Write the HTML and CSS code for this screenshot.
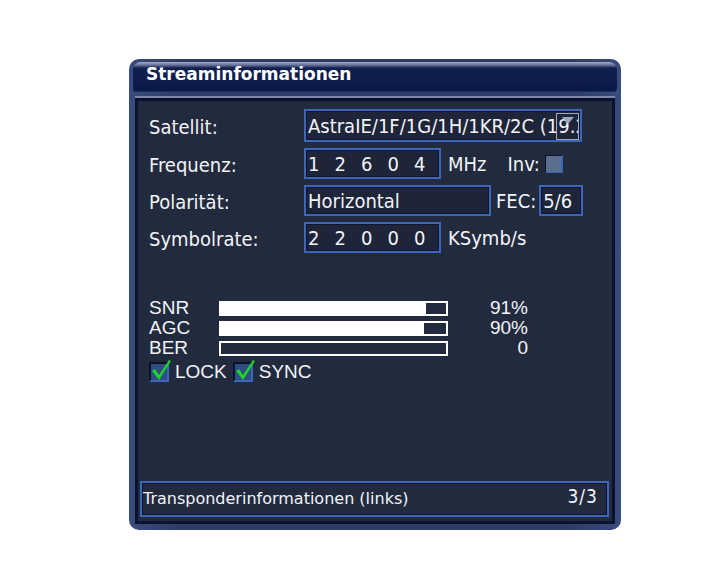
FILE: index.html
```html
<!DOCTYPE html>
<html lang="de">
<head>
    <meta charset="UTF-8">
    <title>Streaminformationen</title>
    <link rel="stylesheet" href="styles.css">
</head>
<body>
    <div class="window">
        <header class="titlebar">
            <h1>Streaminformationen</h1>
        </header>

        <main class="content">
            <section class="tuning">
                <span class="label">Satellit:</span>
                <div class="line">
                    <div class="field sat">
                        <span class="sattext">AstraIE/1F/1G/1H/1KR/2C (19.2</span>
                        <span class="scroll"></span>
                    </div>
                </div>

                <span class="label">Frequenz:</span>
                <div class="line">
                    <div class="field short digits">
                        <span>1</span><span>2</span><span>6</span><span>0</span><span>4</span>
                    </div>
                    <span class="unit">MHz</span>
                    <span class="inv">Inv:</span>
                    <span class="toggle"></span>
                </div>

                <span class="label">Polarität:</span>
                <div class="line">
                    <div class="field pol">Horizontal</div>
                    <span class="fec">FEC:</span>
                    <div class="field fecval">5/6</div>
                </div>

                <span class="label">Symbolrate:</span>
                <div class="line">
                    <div class="field short digits">
                        <span>2</span><span>2</span><span>0</span><span>0</span><span>0</span>
                    </div>
                    <span class="unit">KSymb/s</span>
                </div>
            </section>

            <section class="signal">
                <span>SNR</span>
                <div class="bar"><div class="fill" style="width: 91%"></div></div>
                <span class="val">91%</span>

                <span>AGC</span>
                <div class="bar"><div class="fill" style="width: 90%"></div></div>
                <span class="val">90%</span>

                <span>BER</span>
                <div class="bar"><div class="fill" style="width: 0%"></div></div>
                <span class="val">0</span>
            </section>

            <div class="flags">
                <span class="check"><svg viewBox="0 0 20 22"><path d="M1 12 L4 10 L8 16 L18 1 L20 2 L8 21 Z" fill="#1fd12a"/></svg></span>
                <span>LOCK</span>
                <span class="check"><svg viewBox="0 0 20 22"><path d="M1 12 L4 10 L8 16 L18 1 L20 2 L8 21 Z" fill="#1fd12a"/></svg></span>
                <span>SYNC</span>
            </div>

            <footer class="status">
                <span>Transponderinformationen (links)</span>
                <span class="page">3/3</span>
            </footer>
        </main>
    </div>
</body>
</html>
```

FILE: styles.css
```css
body {
    margin: 0;
    background: #fff;
    font-family: "DejaVu Sans Condensed", "DejaVu Sans", sans-serif;
    color: #f2f4f8;
}

.window {
    margin: 59px 0 0 129px;
    width: 492px;
    height: 471px;
    box-sizing: border-box;
    padding: 3px 6px 6px 6px;
    border-radius: 10px;
    background: linear-gradient(to right, #3a4c7c, #2c3d68 10%, #2c3d68 90%, #3a4c7c);
    display: flex;
    flex-direction: column;
}

.titlebar {
    height: 30px;
    margin: 0 -2px;
    border-radius: 8px 8px 4px 4px;
    background: linear-gradient(to bottom, #a4acbc 0, #68739a 3px, #10204f 6px, #0a1848 100%);
    box-shadow: inset 0 -1px 0 #1c2a5c;
    padding-left: 13px;

    h1 {
        margin: 0;
        font-family: "DejaVu Sans", sans-serif;
        font-size: 17px;
        font-weight: bold;
        line-height: 25px;
        color: #fff;
    }
}

.content {
    margin-top: 4px;
    border-top: 2px solid #7b88a8;
    flex-grow: 1;
    background: #222a3d;
    box-shadow: inset 0 0 0 3px #0b1230;
    display: flex;
    flex-direction: column;
    padding: 11px 8px 7px 14px;
}

.tuning {
    display: grid;
    grid-template-columns: 155px 1fr;
    row-gap: 6px;
    align-items: center;
    font-size: 20px;

    .label {
        padding-top: 2px;
    }
}

.line {
    display: flex;
    align-items: center;
}

.field {
    box-sizing: border-box;
    height: 31px;
    border: 2px solid #3d66b8;
    box-shadow: inset 0 0 0 1px #0e1633;
    background: #1e2538;
    padding: 1px 2px 0;
    line-height: 27px;
    white-space: nowrap;
    overflow: hidden;
}

.sat {
    width: 278px;
    height: 33px;
    line-height: 29px;
    position: relative;
    overflow: visible;
}

.sattext {
    display: block;
    overflow: hidden;
}

.scroll {
    position: absolute;
    right: 1px;
    top: 2px;
    width: 21px;
    height: 25px;
    border: 1px solid #a0a8c0;

    &::after {
        content: "";
        position: absolute;
        left: 5px;
        top: 3px;
        border: 6px solid transparent;
        border-top: 7px solid #a0a8c0;
    }
}

.short {
    width: 137px;
}

.digits {
    display: flex;
    span {
        width: 26.5px;
        flex-shrink: 0;
    }
}

.unit {
    margin-left: 7px;
}

.inv {
    margin-left: 21px;
}

.toggle {
    width: 15px;
    height: 16px;
    margin-left: 5px;
    background: #5a6e90;
    border: 1px solid #0b1230;
    border-right: 2px solid #3d66b8;
    border-bottom: 1px solid #3d66b8;
}

.pol {
    width: 187px;
}

.fec {
    margin-left: 5px;
}

.fecval {
    width: 44px;
    margin-left: 3px;
}

.signal {
    margin-top: 45px;
    display: grid;
    grid-template-columns: 70px 229px 80px;
    grid-auto-rows: 20px;
    align-items: center;
    font-family: "Liberation Sans", Arial, sans-serif;
    font-size: 19px;
    line-height: 20px;

    .val {
        text-align: right;
    }
}

.bar {
    height: 15px;
    box-sizing: border-box;
    border: 2px solid #fff;
    background: #222a3d;
    .fill {
        height: 100%;
        background: #fff;
    }
}

.flags {
    display: flex;
    align-items: center;
    margin-top: 3px;
    font-family: "Liberation Sans", Arial, sans-serif;
    font-size: 19px;

    .check {
        width: 16px;
        height: 16px;
        border: 2px solid #3d66b8;
        border-top-color: #0b1230;
        border-left-color: #0b1230;
        background: #2f4d80;
        position: relative;
        margin-right: 6px;
        svg {
            position: absolute;
            left: 0;
            top: -5px;
            width: 20px;
            height: 22px;
        }
    }
    span + .check {
        margin-left: 6px;
    }
}

.status {
    margin: auto -2px 0 -9px;
    height: 36px;
    box-sizing: border-box;
    border: 2px solid #3d66b8;
    box-shadow: inset 0 0 0 1px #0e1633;
    display: flex;
    justify-content: space-between;
    align-items: center;
    padding: 0 9px 2px 1px;
    font-family: "DejaVu Sans", sans-serif;
    font-size: 16px;

    .page {
        font-family: "DejaVu Sans Condensed", sans-serif;
        font-size: 19px;
        letter-spacing: 1px;
        margin-bottom: 4px;
    }
}
```
